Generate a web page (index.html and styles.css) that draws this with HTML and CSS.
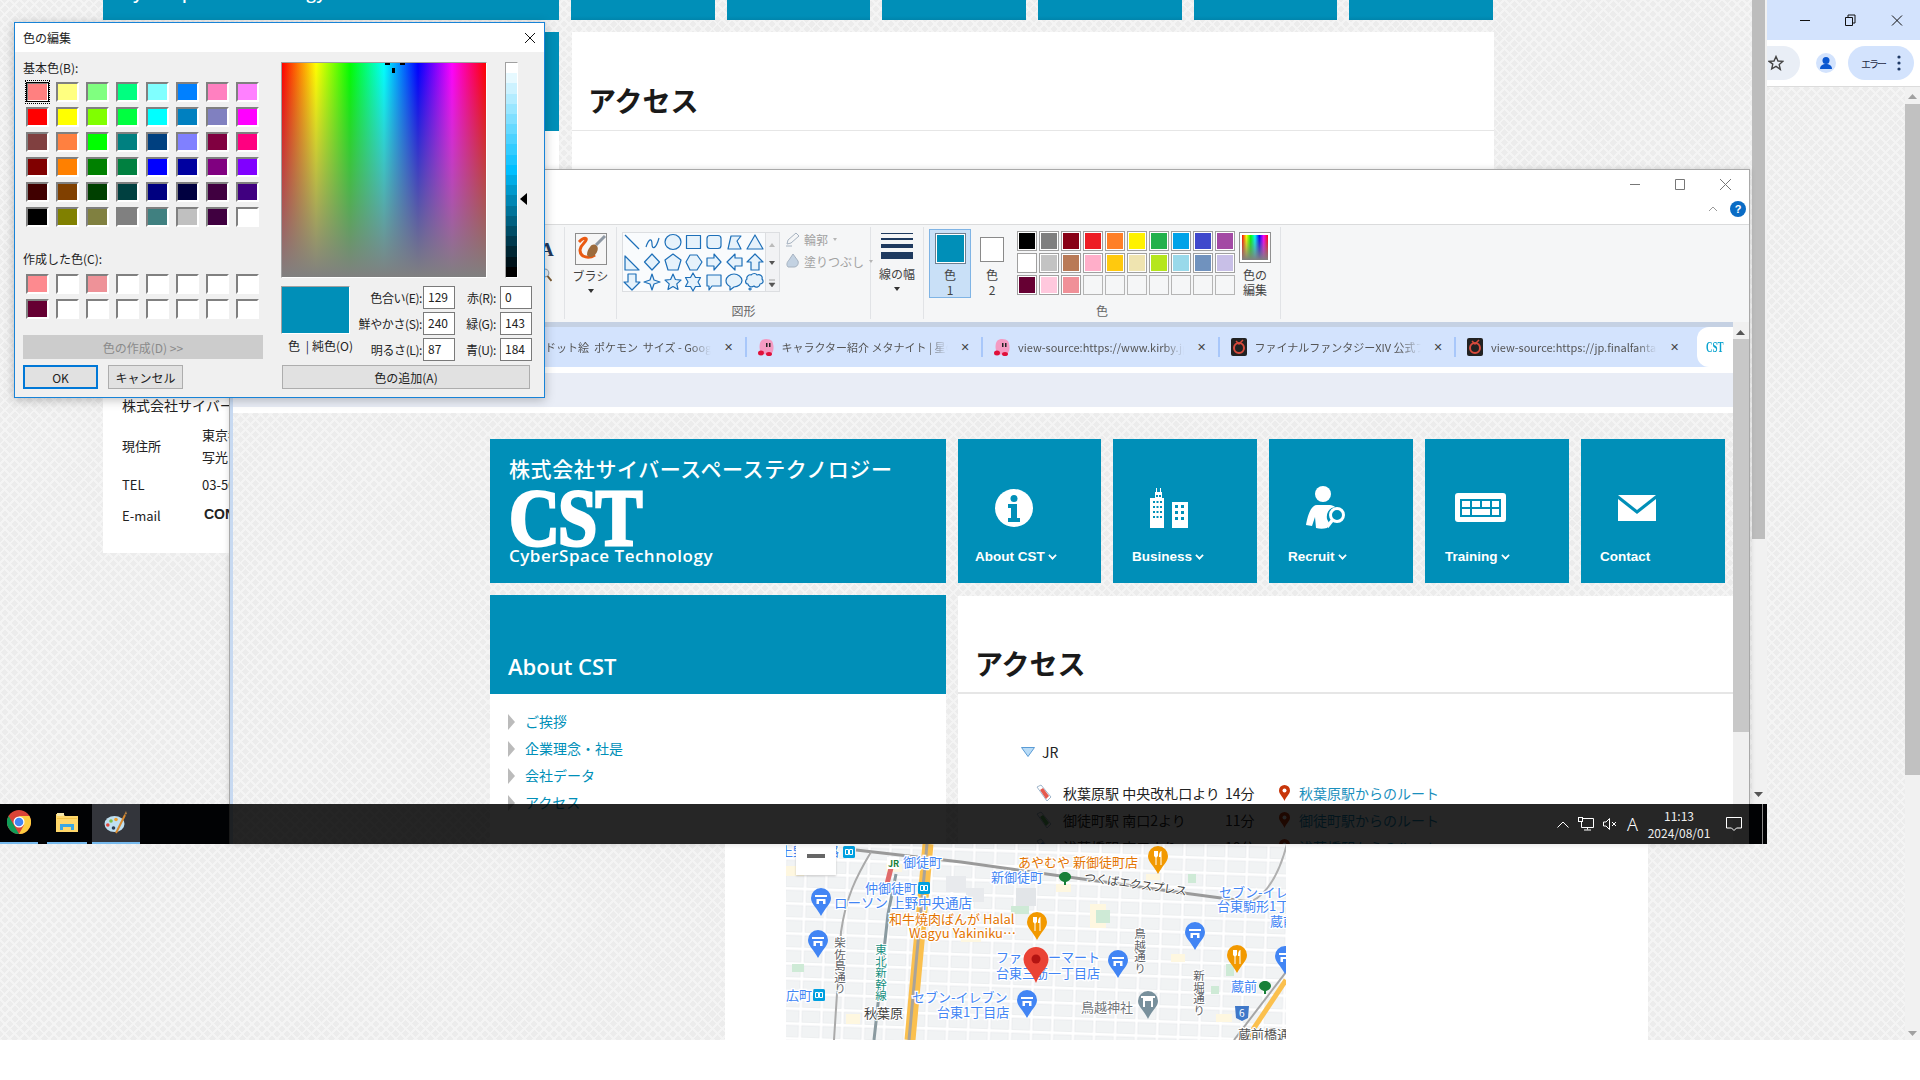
FILE: index.html
```html
<!DOCTYPE html>
<html lang="ja">
<head>
<meta charset="utf-8">
<title>Paint</title>
<link rel="stylesheet" href="styles.css">
</head>
<body>
<div class="desktop">

  <!-- back page -->
  <section class="back">
    <div class="back-nav">
      <div class="back-logo"><span class="back-logo-text">CyberSpace Technology</span></div>
      <div class="back-tile"></div><div class="back-tile"></div><div class="back-tile"></div><div class="back-tile"></div><div class="back-tile"></div><div class="back-tile"></div>
    </div>
    <div class="back-main">
      <aside class="back-side">
        <div class="back-side-head"></div>
        <div class="back-side-body">
          <div class="co-name">株式会社サイバースペース</div>
          <div class="co-row co-addr"><span class="co-key">現住所</span><span class="co-val">東京都<br>写光ビル</span></div>
          <div class="co-row co-tel"><span class="co-key">TEL</span><span class="co-val">03-5000-0000</span></div>
          <div class="co-row"><span class="co-key">E-mail</span><span class="co-val co-mail">CONTACT</span></div>
        </div>
      </aside>
      <div class="back-content"><h1 class="back-h1">アクセス</h1></div>
    </div>
  </section>

  <!-- back chrome right -->
  <div class="bar-back"><div class="bar-back-thumb"></div><svg class="bar-back-arrow" width="9" height="5" viewBox="0 0 9 5"><path d="M0 0h9L4.500 5z" fill="#555"/></svg></div>
  <div class="chrome-right">
    <div class="chrome-caption">
      <svg width="138" height="40" viewBox="0 0 138 40" fill="none" stroke="#111" stroke-width="1"><path d="M33 20.500h10"/><path d="M78.500 17.500h7v8h-7zM81 17.500v-2.500h7v8h-2.500"/><path d="M125 15.500l10 10M135 15.500l-10 10"/></svg>
    </div>
    <div class="chrome-tools">
      <div class="omni-end"><svg width="16" height="16" viewBox="0 0 16 16"><path d="M8 1.500l2 4.500 4.800.4-3.600 3.200 1.100 4.800L8 11.400l-4.300 2.500 1.100-4.800L1.200 6.400 6 6z" fill="none" stroke="#444" stroke-width="1.400"/></svg></div>
      <div class="avatar"><svg width="20" height="20" viewBox="0 0 20 20"><circle cx="10" cy="10" r="10" fill="#d3e3fd"/><circle cx="10" cy="7.500" r="3.500" fill="#0b57d0"/><path d="M4 16c0-3.500 2.700-5 6-5s6 1.500 6 5z" fill="#0b57d0"/></svg></div>
      <div class="err-pill"><span>エラー</span><svg width="4" height="16" viewBox="0 0 4 16" fill="#1f3a66"><circle cx="2" cy="2" r="1.600"/><circle cx="2" cy="8" r="1.600"/><circle cx="2" cy="14" r="1.600"/></svg></div>
    </div>
  </div>
  <div class="bar-outer"><svg class="bar-outer-up" width="9" height="5" viewBox="0 0 9 5"><path d="M0 5h9L4.500 0z" fill="#a0a0a0"/></svg><div class="bar-outer-thumb"></div><svg class="bar-outer-down" width="9" height="5" viewBox="0 0 9 5"><path d="M0 0h9L4.500 5z" fill="#a0a0a0"/></svg></div>

  <!-- lower page with map -->
  <section class="lower">
    <div class="map">
      <svg width="500" height="196" viewBox="0 0 500 196" font-family="'Noto Sans CJK JP',sans-serif" font-size="13">
        <defs>
          <pattern id="blocks" width="21" height="15" patternUnits="userSpaceOnUse" patternTransform="rotate(2)">
            <rect width="21" height="15" fill="#fff"/>
            <rect x="1" y="1" width="18" height="11.500" fill="#f1f3f4" stroke="#e3e5e8" stroke-width=".5"/>
          </pattern>
          <g id="pinb"><path d="M0 0a10 10 0 0 1 10 10c0 6-6 10-10 18-4-8-10-12-10-18A10 10 0 0 1 0 0z" fill="#4285f4"/><path d="M-6 7h12v2H-6zM-4.500 11h9v5H2v-3h-4v3h-2.500z" fill="#fff"/></g>
          <g id="pino"><path d="M0 0a10 10 0 0 1 10 10c0 6-6 10-10 18-4-8-10-12-10-18A10 10 0 0 1 0 0z" fill="#f29900"/><path d="M-4 5v5l1.500 1.500V19h1v-7.500L0 10V5M3 5c-1.500 1-2 3-2 6h1.500v8h1V5z" fill="#fff"/></g>
          <g id="metro"><rect width="12" height="12" rx="1.500" fill="#00a0e0"/><path d="M2.500 3.500h3v5h-3zM6.500 3.500h3v5h-3z" fill="none" stroke="#fff"/></g>
        </defs>
        <rect width="500" height="196" fill="url(#blocks)"/>
        <g fill="#fef7e0"><rect x="0" y="22" width="18" height="10"/><rect x="100" y="20" width="16" height="8"/><rect x="304" y="60" width="16" height="24"/><rect x="175" y="90" width="20" height="8"/><rect x="60" y="170" width="14" height="10"/><rect x="385" y="110" width="14" height="8"/><rect x="430" y="170" width="16" height="8"/><rect x="270" y="40" width="15" height="8"/><rect x="360" y="30" width="14" height="6"/></g>
        <g fill="#ceead6"><rect x="310" y="66" width="14" height="13"/><rect x="225" y="62" width="18" height="8"/><rect x="402" y="30" width="8" height="9"/><rect x="440" y="120" width="8" height="12"/><rect x="6" y="120" width="12" height="8"/><rect x="425" y="142" width="8" height="8"/></g>
        <rect x="230" y="44" width="20" height="18" fill="#e2e5e8"/>
        <rect x="160" y="32" width="20" height="16" fill="#e8eaed"/>
        <rect x="180" y="44" width="18" height="14" fill="#e8eaed"/>
        <!-- railways and main roads -->
        <path d="M70 6l105 12 230 32 60 8" fill="none" stroke="#9a9a9a" stroke-width="3"/>
        <path d="M465 58c20-10 30-35 36-58" fill="none" stroke="#b0b0b0" stroke-width="2"/>
        <path d="M85 8c-15 25-25 45-30 80L48 196" fill="none" stroke="#aaa" stroke-width="2"/>
        <path d="M142 0l-18 196" fill="none" stroke="#fbc04e" stroke-width="11"/>
        <path d="M141 0l-18 196" fill="none" stroke="#a9a39a" stroke-width="3"/>
        <path d="M110 30l-8 40-14 126" fill="none" stroke="#8a9aa0" stroke-width="3"/>
        <path d="M105 24l-5 20" fill="none" stroke="#e06a6a" stroke-width="5"/>
        <path d="M460 196l40-60" fill="none" stroke="#fbc04e" stroke-width="5"/>
        <path d="M448 196l52-68" fill="none" stroke="#a6a6a6" stroke-width="2"/>
        <!-- pins -->
        <use href="#pinb" x="35" y="44"/><use href="#pinb" x="32" y="86"/><use href="#pinb" x="332" y="106"/>
        <use href="#pinb" x="409" y="78"/><use href="#pinb" x="499" y="102"/><use href="#pinb" x="241" y="146"/>
        <use href="#pino" x="372" y="2"/><use href="#pino" x="251" y="68"/><use href="#pino" x="451" y="101"/>
        <use href="#metro" x="57" y="2"/><use href="#metro" x="132" y="38"/><use href="#metro" x="27" y="145"/>
        <path d="M362 158a10 10 0 0 1 10 10c0 6-6 9-10 18-4-9-10-12-10-18a10 10 0 0 1 10-10z" transform="translate(0 -11)" fill="#78909c"/>
        <path d="M355 152h14v2h-2v9h-2v-6h-6v6h-2v-9h-2z" fill="#fff"/>
        <path d="M279 38c-2 0-6-2-6-5s3-5 6-5 6 2 6 5-4 5-6 5z" fill="#188038"/><rect x="278" y="37" width="2" height="4" fill="#188038"/>
        <path d="M479 147c-2 0-6-2-6-5s3-5 6-5 6 2 6 5-4 5-6 5z" fill="#188038"/><rect x="478" y="146" width="2" height="4" fill="#188038"/>
        <rect x="101" y="13" width="12" height="12" fill="#fff"/><text x="102" y="23" font-size="9" font-weight="700" fill="#188038">JR</text>
        <path d="M449 162h14l-1 12-6 3-6-3z" fill="#3f78c9"/><text x="453" y="173" font-size="10" fill="#fff">6</text>
        <!-- labels -->
        <g fill="#4285f4" stroke="#fff" stroke-width="2.500" paint-order="stroke">
          <text x="-6" y="12">上野</text><text x="40" y="12">路</text><text x="117" y="23">御徒町</text><text x="205" y="38">新御徒町</text>
          <text x="79" y="49">仲御徒町</text><text x="48" y="64" font-size="13.500">ローソン 上野中央通店</text>
          <text x="210" y="118">ファミリーマート</text><text x="210" y="134">台東三筋一丁目店</text>
          <text x="0" y="156">広町</text><text x="126" y="158">セブン-イレブン</text><text x="151" y="173">台東1丁目店</text>
          <text x="433" y="53">セブン-イレ</text><text x="431" y="67">台東駒形1丁目</text><text x="484" y="82">蔵前</text><text x="445" y="147">蔵前</text>
        </g>
        <g fill="#e37400" stroke="#fff" stroke-width="2.500" paint-order="stroke">
          <text x="232" y="23">あやむや 新御徒町店</text><text x="103" y="80">和牛焼肉ばんが Halal</text><text x="123" y="94">Wagyu Yakiniku…</text>
        </g>
        <g fill="#5f6368" stroke="#fff" stroke-width="2" paint-order="stroke">
          <text x="78" y="174" fill="#444">秋葉原</text><text x="295" y="168" fill="#70757a">鳥越神社</text><text x="452" y="195" fill="#555">蔵前橋通</text>
          <text x="298" y="37" font-size="11.500" transform="rotate(8 298 37)" fill="#444">つくばエクスプレス</text>
        </g>
        <g class="map-v" fill="#5f6368" font-size="11.500" stroke="#fff" stroke-width="2" paint-order="stroke">
          <text x="54" y="93">柴佐島通り</text><text x="354" y="84">鳥越通り</text><text x="413" y="126">新堀通り</text>
          <text x="95" y="100" fill="#188f7f">東北新幹線</text>
        </g>
        <!-- red marker -->
        <path d="M250 103a12.500 12.500 0 0 1 12.500 12.500c0 8-8 12-12.500 23.500-4.500-11.500-12.500-15.500-12.500-23.500A12.500 12.500 0 0 1 250 103z" fill="#ea4335"/>
        <circle cx="250" cy="115" r="4.500" fill="#b31412"/>
      </svg>
      <div class="map-zoom"><span class="map-minus"></span></div>
    </div>
  </section>
  <div class="bottom-white"></div>

  <!-- paint window -->
  <section class="paint">
    <header class="paint-title">
      <div class="paint-caption">
        <svg width="112" height="22" viewBox="0 0 112 22" fill="none" stroke="#777"><path d="M6 11.500h10"/><path d="M51.500 6.500h9v10h-9z"/><path d="M96 6l11 11M107 6L96 17"/></svg>
      </div>
      <div class="paint-help">
        <svg width="10" height="6" viewBox="0 0 10 6"><path d="M1 5l4-4 4 4" fill="none" stroke="#999"/></svg>
        <span class="help-dot">?</span>
      </div>
    </header>
    <div class="ribbon">
      <div class="rb-group rb-tools">
        <span class="rb-a">A</span>
        <svg width="12" height="14" viewBox="0 0 12 14"><circle cx="5" cy="5" r="3.800" fill="#e8f0f8" stroke="#9aa8b5" stroke-width="1.200"/><path d="M7.500 8l4 5" stroke="#7a5a32" stroke-width="2"/></svg>
      </div>
      <div class="rb-group rb-brush">
        <svg class="brush-ico" width="32" height="32" viewBox="0 0 32 32"><rect x=".5" y=".5" width="31" height="31" fill="#f6f6f6" stroke="#8d8d8d"/><path d="M4 9c6-6 10-4 5 1-4 4-6 9-1 13 4 2 9 1 12-1" fill="none" stroke="#ea5a12" stroke-width="3"/><path d="M15 14c2-3 5-3 7-1 2 3 0 7-3 10-3 2-6 1-7-1 0-3 1-6 3-8z" fill="#9c6b3c"/><path d="M21 12L30 3" stroke="#8e98a3" stroke-width="3"/></svg>
        <span class="rb-lbl">ブラシ</span>
        <span class="caret"></span>
      </div>
      <div class="rb-group rb-shapes">
        <div class="rb-shapes-row">
          <div class="gallery">
            <svg width="143" height="60" viewBox="0 0 143 60" fill="#e6f2fb" stroke="#1d6fb8" stroke-width="1.200" stroke-linejoin="round">
              <path d="M3 3l14 14" fill="none"/>
              <path d="M24 15c3-9 6-9 6-3s4 5 7-6" fill="none"/>
              <ellipse cx="51" cy="10" rx="8" ry="7.500"/>
              <rect x="64.500" y="3.500" width="14" height="13"/>
              <rect x="85" y="3.500" width="14" height="13" rx="3"/>
              <path d="M106 17l3-13h10l-4 5 4 8z"/>
              <path d="M133 3l8 14h-16z"/>
              <path d="M3 24v14h14z"/>
              <path d="M30 22l7.500 8-7.500 8-7.500-8z"/>
              <path d="M51 22l8 6-3 10H46l-3-10z"/>
              <path d="M68 23h7l5 7-5 8h-7l-4-8z"/>
              <path d="M85 26h7v-4l7 8-7 8v-4h-7z"/>
              <path d="M120 26h-7v-4l-8 8 8 8v-4h7z"/>
              <path d="M133 22l8 8h-4v8h-8v-8h-4z"/>
              <path d="M6 42h8v8h4l-8 8-8-8h4z"/>
              <path d="M30 42l2 6 6 2-6 2-2 6-2-6-6-2 6-2z"/>
              <path d="M51 42l2.400 5.500 5.600.6-4.200 3.800 1.200 5.600-5-3-5 3 1.200-5.600L43 48.100l5.600-.6z"/>
              <path d="M71 41l2.500 4.500h5l-2.500 4.500 2.500 4.500h-5L71 59l-2.500-4.500h-5L66 50l-2.500-4.500h5z"/>
              <path d="M85 43h14v11h-9l-3 4v-4h-2z"/>
              <path d="M112 42c4 0 8 3 8 6.500s-4 6.500-8 6.500l-4 3v-3.500c-2-1-4-3-4-6 0-3.500 4-6.500 8-6.500z"/>
              <path d="M129 43c2-2 5-2 6 0 3-1 6 1 5 4 2 2 1 5-2 5 0 3-4 4-6 2-3 2-6 0-6-2-3 0-3-4-1-5-1-2 2-5 4-4zM128 56a1 1 0 1 0 .1 0"/>
            </svg>
          </div>
          <div class="gal-scroll">
            <svg width="14" height="60" viewBox="0 0 14 60"><path d="M4 14l3-4 3 4z" fill="#bbb"/><path d="M4 28l3 4 3-4z" fill="#555"/><path d="M4 47h6M4 50l3 4 3-4z" fill="#555" stroke="#555" stroke-width=".5"/></svg>
          </div>
          <div class="outline-col">
            <div class="out-row"><svg width="16" height="16" viewBox="0 0 16 16" fill="none" stroke="#a6b2c0"><path d="M2 13l1-4 8-7 3 3-8 7z"/><path d="M1 15h6"/></svg><span>輪郭</span><i class="caret-sm"></i></div>
            <div class="out-row"><svg width="16" height="16" viewBox="0 0 16 16"><path d="M8 1l5 7c1 3-1 6-4 6H3c-2-2-1-5 1-7z" fill="#c3d2e2" stroke="#a6b2c0"/></svg><span>塗りつぶし</span><i class="caret-sm"></i></div>
          </div>
        </div>
        <div class="rb-foot">図形</div>
      </div>
      <div class="rb-group rb-width">
        <div class="width-ico"><i class="w1"></i><i class="w2"></i><i class="w3"></i><i class="w4"></i></div>
        <span class="rb-lbl">線の幅</span>
        <span class="caret"></span>
      </div>
      <div class="rb-group rb-colors">
        <div class="rb-colors-row">
          <div class="col-btn col-active"><span class="col-sw col-sw1"></span><span class="col-txt">色<br>1</span></div>
          <div class="col-btn"><span class="col-sw col-sw2"></span><span class="col-txt">色<br>2</span></div>
          <div class="col-grid">
            <i style="background:#000"></i><i style="background:#7f7f7f"></i><i style="background:#880015"></i><i style="background:#ed1c24"></i><i style="background:#ff7f27"></i><i style="background:#fff200"></i><i style="background:#22b14c"></i><i style="background:#00a2e8"></i><i style="background:#3f48cc"></i><i style="background:#a349a4"></i>
            <i style="background:#fff"></i><i style="background:#c3c3c3"></i><i style="background:#b97a57"></i><i style="background:#ffaec9"></i><i style="background:#ffc90e"></i><i style="background:#efe4b0"></i><i style="background:#b5e61d"></i><i style="background:#99d9ea"></i><i style="background:#7092be"></i><i style="background:#c8bfe7"></i>
            <i style="background:#660033"></i><i style="background:#ffc8dd"></i><i style="background:#f09098"></i><i class="e"></i><i class="e"></i><i class="e"></i><i class="e"></i><i class="e"></i><i class="e"></i><i class="e"></i>
          </div>
          <div class="col-edit"><span class="col-rainbow"></span><span class="col-txt">色の<br>編集</span></div>
        </div>
        <div class="rb-foot">色</div>
      </div>
    </div>

    <div class="canvas">
      <div class="shot">
        <div class="shot-band"></div>
        <div class="tabstrip">
          <div class="tab tab-first"><span class="tab-text">ドット絵&nbsp; ポケモン&nbsp; サイズ - Google 検索</span><span class="tab-x">✕</span></div><i class="tab-sep"></i>
          <div class="tab"><svg class="fav" width="16" height="18" viewBox="0 0 16 18"><path d="M3 3c3-3 9-2 11 0 2 4 2 9 0 12-3 2-8 2-11 0-2-4-2-9 0-12z" fill="#f49ac2"/><ellipse cx="3" cy="15" rx="3" ry="2.500" fill="#e0103a"/><ellipse cx="11" cy="16" rx="3" ry="2" fill="#e0103a"/><rect x="8" y="5" width="1.500" height="4" fill="#222"/><rect x="11" y="5" width="1.500" height="4" fill="#222"/></svg><span class="tab-text">キャラクター紹介 メタナイト | 星のカービィ</span><span class="tab-x">✕</span></div><i class="tab-sep"></i>
          <div class="tab"><svg class="fav" width="16" height="18" viewBox="0 0 16 18"><path d="M3 3c3-3 9-2 11 0 2 4 2 9 0 12-3 2-8 2-11 0-2-4-2-9 0-12z" fill="#f49ac2"/><ellipse cx="3" cy="15" rx="3" ry="2.500" fill="#e0103a"/><ellipse cx="11" cy="16" rx="3" ry="2" fill="#e0103a"/><rect x="8" y="5" width="1.500" height="4" fill="#222"/><rect x="11" y="5" width="1.500" height="4" fill="#222"/></svg><span class="tab-text">view-source:https://www.kirby.jp/characters</span><span class="tab-x">✕</span></div><i class="tab-sep"></i>
          <div class="tab"><svg class="fav" width="16" height="18" viewBox="0 0 16 18"><rect width="16" height="18" rx="2" fill="#222"/><circle cx="8" cy="10" r="5" fill="none" stroke="#d84a3c" stroke-width="2"/><path d="M5 3l3 3 4-4" fill="none" stroke="#d84a3c" stroke-width="1.500"/></svg><span class="tab-text">ファイナルファンタジーXIV 公式プロモーション</span><span class="tab-x">✕</span></div><i class="tab-sep tab-sep-last"></i>
          <div class="tab tab-last"><svg class="fav" width="16" height="18" viewBox="0 0 16 18"><rect width="16" height="18" rx="2" fill="#222"/><circle cx="8" cy="10" r="5" fill="none" stroke="#d84a3c" stroke-width="2"/><path d="M5 3l3 3 4-4" fill="none" stroke="#d84a3c" stroke-width="1.500"/></svg><span class="tab-text">view-source:https://jp.finalfantasyxiv.com</span><span class="tab-x">✕</span></div>
          <div class="tab-active"><span class="fav-cst">CST</span></div>
        </div>
        <div class="shot-gap"></div>
        <div class="shot-toolbar"></div>
        <div class="shot-gap"></div>
        <div class="site">
          <div class="site-head">
            <div class="logo">
              <div class="logo-jp">株式会社サイバースペーステクノロジー</div>
              <div class="logo-cst">CST</div>
              <div class="logo-en">CyberSpace Technology</div>
            </div>
            <a class="tile tile-first">
              <svg class="tile-ico" width="38" height="38" viewBox="0 0 38 38"><circle cx="19" cy="19" r="19" fill="#fff"/><circle cx="19" cy="9.500" r="3.500" fill="#008fb8"/><path d="M13 15h9v14h3v4H13v-4h3v-10h-3z" fill="#008fb8"/></svg>
              <span class="tile-lbl">About CST<i class="chev"></i></span>
            </a>
            <a class="tile">
              <svg class="tile-ico" width="38" height="40" viewBox="0 0 38 40" fill="#fff"><path d="M5 4h1V0h1v4h3V0h1v4h1v6h2v30H0V10h5z"/><rect x="22" y="14" width="16" height="26"/><g fill="#008fb8"><rect x="6" y="7" width="2" height="2"/><rect x="9" y="7" width="2" height="2"/><rect x="3" y="13" width="2" height="2"/><rect x="6.500" y="13" width="2" height="2"/><rect x="10" y="13" width="2" height="2"/><rect x="3" y="18" width="2" height="2"/><rect x="6.500" y="18" width="2" height="2"/><rect x="10" y="18" width="2" height="2"/><rect x="3" y="23" width="2" height="2"/><rect x="6.500" y="23" width="2" height="2"/><rect x="10" y="23" width="2" height="2"/><rect x="3" y="28" width="2" height="2"/><rect x="6.500" y="28" width="2" height="2"/><rect x="10" y="28" width="2" height="2"/><rect x="25" y="17" width="3" height="3"/><rect x="31" y="17" width="3" height="3"/><rect x="25" y="23" width="3" height="3"/><rect x="31" y="23" width="3" height="3"/><rect x="25" y="29" width="3" height="3"/><rect x="31" y="29" width="3" height="3"/></g></svg>
              <span class="tile-lbl">Business<i class="chev"></i></span>
            </a>
            <a class="tile">
              <svg class="tile-ico" width="40" height="43" viewBox="0 0 40 43" fill="#fff"><circle cx="17" cy="8" r="8"/><path d="M11 19h13c2 0 4 1 5 2-6 1-9 6-8 12l2 4-2 5c-4 1-7 1-11 0l-1-11-3 9-6-1c1-6 4-20 11-20z"/><circle cx="31" cy="29" r="6.500" fill="none" stroke="#fff" stroke-width="3"/><path d="M26.500 34L21 41" stroke="#fff" stroke-width="3.500"/></svg>
              <span class="tile-lbl">Recruit<i class="chev"></i></span>
            </a>
            <a class="tile">
              <svg class="tile-ico" width="51" height="29" viewBox="0 0 51 29"><rect width="51" height="29" rx="3" fill="#fff"/><rect x="5" y="6" width="41" height="18" fill="#008fb8"/><g fill="#fff"><rect x="7" y="8" width="8" height="6"/><rect x="17" y="8" width="8" height="6"/><rect x="27" y="8" width="8" height="6"/><rect x="37" y="8" width="7" height="6"/><rect x="7" y="16" width="8" height="6"/><rect x="17" y="16" width="18" height="6"/><rect x="37" y="16" width="7" height="6"/></g></svg>
              <span class="tile-lbl">Training<i class="chev"></i></span>
            </a>
            <a class="tile">
              <svg class="tile-ico" width="38" height="26" viewBox="0 0 38 26" fill="#fff"><path d="M0 0h38L19 15z"/><path d="M0 4l19 15L38 4v22H0z"/></svg>
              <span class="tile-lbl">Contact</span>
            </a>
          </div>
          <div class="site-main">
            <aside class="side">
              <h2 class="side-head">About CST</h2>
              <ul class="side-list">
                <li>ご挨拶</li><li>企業理念・社是</li><li>会社データ</li><li>アクセス</li>
              </ul>
            </aside>
            <article class="content">
              <h1 class="content-h1">アクセス</h1>
              <div class="route">
                <div class="jr"><svg width="14" height="10" viewBox="0 0 14 10"><path d="M.5.500h13L7 9.500z" fill="#b9dcf7" stroke="#5a9bd5"/></svg><span>JR</span></div>
                <div class="st">
                  <svg width="16" height="18" viewBox="0 0 16 18"><path d="M1 3l4-2 10 12-4 4z" fill="#fff" stroke="#9fb6cc"/><path d="M4 6l3-2 6 8-3 3z" fill="#e55a4e"/></svg>
                  <span class="st-a">秋葉原駅 中央改札口より</span><span class="st-b">14分</span>
                  <svg class="st-pin" width="11" height="16" viewBox="0 0 11 16"><path d="M5.500 0A5.500 5.500 0 0 1 11 5.500c0 3.500-3.500 5.500-5.500 10.500C3.500 11 0 9 0 5.500A5.500 5.500 0 0 1 5.500 0z" fill="#c8360a"/><circle cx="5.500" cy="5.500" r="2" fill="#fff"/></svg>
                  <span class="st-link">秋葉原駅からのルート</span>
                </div>
                <div class="st">
                  <svg width="16" height="18" viewBox="0 0 16 18"><path d="M1 3l4-2 10 12-4 4z" fill="#fff" stroke="#9fb6cc"/><path d="M4 6l3-2 6 8-3 3z" fill="#5cb85c"/></svg>
                  <span class="st-a">御徒町駅 南口2より</span><span class="st-b">11分</span>
                  <svg class="st-pin" width="11" height="16" viewBox="0 0 11 16"><path d="M5.500 0A5.500 5.500 0 0 1 11 5.500c0 3.500-3.500 5.500-5.500 10.500C3.500 11 0 9 0 5.500A5.500 5.500 0 0 1 5.500 0z" fill="#c8360a"/><circle cx="5.500" cy="5.500" r="2" fill="#fff"/></svg>
                  <span class="st-link">御徒町駅からのルート</span>
                </div>
                <div class="st">
                  <svg width="16" height="18" viewBox="0 0 16 18"><path d="M1 3l4-2 10 12-4 4z" fill="#fff" stroke="#9fb6cc"/><path d="M4 6l3-2 6 8-3 3z" fill="#5b8ed6"/></svg>
                  <span class="st-a">浅草橋駅 東口より</span><span class="st-b">10分</span>
                  <svg class="st-pin" width="11" height="16" viewBox="0 0 11 16"><path d="M5.500 0A5.500 5.500 0 0 1 11 5.500c0 3.500-3.500 5.500-5.500 10.500C3.500 11 0 9 0 5.500A5.500 5.500 0 0 1 5.500 0z" fill="#c8360a"/><circle cx="5.500" cy="5.500" r="2" fill="#fff"/></svg>
                  <span class="st-link">浅草橋駅からのルート</span>
                </div>
              </div>
            </article>
          </div>
        </div>
      </div>
      <div class="canvas-bar">
        <svg class="canvas-bar-up" width="9" height="5" viewBox="0 0 9 5"><path d="M0 5h9L4.500 0z" fill="#555"/></svg>
        <div class="canvas-bar-thumb"></div>
      </div>
    </div>
  </section>

  <!-- colour dialog -->
  <section class="dialog">
    <header class="dlg-title"><span>色の編集</span><svg width="12" height="12" viewBox="0 0 12 12"><path d="M1 1l10 10M11 1L1 11" stroke="#111" fill="none"/></svg></header>
    <div class="dlg-body">
      <div class="dlg-left">
        <div class="dlg-lbl">基本色(B):</div>
        <div class="sw-grid">
          <i class="sel" style="background:#ff8080"></i><i style="background:#ffff80"></i><i style="background:#80ff80"></i><i style="background:#00ff80"></i><i style="background:#80ffff"></i><i style="background:#0080ff"></i><i style="background:#ff80c0"></i><i style="background:#ff80ff"></i>
          <i style="background:#ff0000"></i><i style="background:#ffff00"></i><i style="background:#80ff00"></i><i style="background:#00ff40"></i><i style="background:#00ffff"></i><i style="background:#0080c0"></i><i style="background:#8080c0"></i><i style="background:#ff00ff"></i>
          <i style="background:#804040"></i><i style="background:#ff8040"></i><i style="background:#00ff00"></i><i style="background:#008080"></i><i style="background:#004080"></i><i style="background:#8080ff"></i><i style="background:#800040"></i><i style="background:#ff0080"></i>
          <i style="background:#800000"></i><i style="background:#ff8000"></i><i style="background:#008000"></i><i style="background:#008040"></i><i style="background:#0000ff"></i><i style="background:#0000a0"></i><i style="background:#800080"></i><i style="background:#8000ff"></i>
          <i style="background:#400000"></i><i style="background:#804000"></i><i style="background:#004000"></i><i style="background:#004040"></i><i style="background:#000080"></i><i style="background:#000040"></i><i style="background:#400040"></i><i style="background:#400080"></i>
          <i style="background:#000000"></i><i style="background:#808000"></i><i style="background:#808040"></i><i style="background:#808080"></i><i style="background:#408080"></i><i style="background:#c0c0c0"></i><i style="background:#400040"></i><i style="background:#ffffff"></i>
        </div>
        <div class="dlg-lbl dlg-lbl2">作成した色(C):</div>
        <div class="sw-grid sw-custom">
          <i style="background:#fd8a8f"></i><i></i><i style="background:#ee9298"></i><i></i><i></i><i></i><i></i><i></i>
          <i style="background:#660033"></i><i></i><i></i><i></i><i></i><i></i><i></i><i></i>
        </div>
        <button class="dlg-btn dlg-define">色の作成(D) &gt;&gt;</button>
        <div class="dlg-actions">
          <button class="dlg-btn dlg-ok">OK</button>
          <button class="dlg-btn dlg-cancel">キャンセル</button>
        </div>
      </div>
      <div class="dlg-right">
        <div class="picker">
          <div class="hue">
            <span class="cross cross-l"></span><span class="cross cross-r"></span><span class="cross cross-b"></span>
          </div>
          <div class="lum"></div>
          <span class="lum-arrow"></span>
        </div>
        <div class="dlg-values">
          <div class="preview-col">
            <div class="preview"></div>
            <div class="preview-lbl">色 <b>|</b>純色(O)</div>
          </div>
          <div class="fields">
            <label>色合い(E):</label><span class="fld">129</span><label>赤(R):</label><span class="fld">0</span>
            <label>鮮やかさ(S):</label><span class="fld">240</span><label>緑(G):</label><span class="fld">143</span>
            <label>明るさ(L):</label><span class="fld">87</span><label>青(U):</label><span class="fld">184</span>
          </div>
        </div>
        <button class="dlg-btn dlg-add">色の追加(A)</button>
      </div>
    </div>
  </section>

  <!-- taskbar -->
  <footer class="taskbar">
    <div class="task-apps">
      <div class="task-app task-chrome"><svg width="24" height="24" viewBox="0 0 24 24"><circle cx="12" cy="12" r="12" fill="#db4437"/><path d="M12 12L1.500 18A12 12 0 0 1 4 3.500z" fill="#db4437"/><path d="M1.600 6l5.200 9 5.200 9A12 12 0 0 1 1.600 6z" fill="#0f9d58"/><path d="M12 24a12 12 0 0 0 10.400-18H12l5 9z" fill="#ffcd40"/><circle cx="12" cy="12" r="5.500" fill="#fff"/><circle cx="12" cy="12" r="4.300" fill="#4285f4"/></svg></div>
      <div class="task-app task-files"><svg width="22" height="19" viewBox="0 0 22 19"><path d="M0 1h7l2 2h13v16H0z" fill="#ffd76a"/><rect x="1" y="0" width="7" height="3" fill="#f6e7a8"/><rect x="1" y="5" width="20" height="1" fill="#f3c44a"/><path d="M4 11h14v6h-3v-3H7v3H4z" fill="#3aa7e3"/></svg></div>
      <div class="task-app task-paint"><svg width="24" height="24" viewBox="0 0 24 24"><ellipse cx="10.500" cy="14" rx="10" ry="8" fill="#bfdff0"/><circle cx="7" cy="11" r="1.800" fill="#7cc04b"/><circle cx="12" cy="9.500" r="1.800" fill="#f0a030"/><circle cx="3.800" cy="15" r="1.800" fill="#e0483c"/><circle cx="9.500" cy="18" r="1.800" fill="#2b3d55"/><path d="M12 23L21 5" stroke="#d98a2f" stroke-width="2"/><path d="M20 5l2-4 1 3z" fill="#b57f3f"/></svg></div>
    </div>
    <div class="task-mid"></div>
    <div class="tray">
      <svg width="12" height="7" viewBox="0 0 12 7"><path d="M.5 6.500L6 1l5.500 5.500" fill="none" stroke="#fff"/></svg>
      <svg width="16" height="14" viewBox="0 0 16 14" fill="none" stroke="#fff"><path d="M3.500 1.500h12v9h-12zM9.500 10.500v2M6 13h7"/><rect x=".5" y=".5" width="4" height="4" fill="#262626"/></svg>
      <svg width="15" height="12" viewBox="0 0 15 12" fill="none" stroke="#fff"><path d="M.5 4h2.500L6.500.5v11L3 8H.5z"/><path d="M9 4l4 4M13 4L9 8"/></svg>
      <span class="tray-a">A</span>
      <div class="clock"><span>11:13</span><span>2024/08/01</span></div>
      <svg width="16" height="15" viewBox="0 0 16 15" fill="none" stroke="#fff"><path d="M.5.500h15v10.500h-5l-2.500 2.500-2.500-2.500h-5z"/></svg>
    </div>
    <div class="task-end"></div>
  </footer>
</div>
</body>
</html>
```

FILE: styles.css
```css
* { box-sizing: border-box; }
html, body { margin: 0; padding: 0; width: 1920px; height: 1080px; overflow: hidden; }
body { font-family: "Noto Sans CJK JP", "Noto Sans", sans-serif; font-size: 12px; color: #222; }
button { font: inherit; padding: 0; }

.desktop {
  position: relative; width: 1920px; height: 1080px; overflow: hidden;
  background-color: #ececec;
  background-image:
    repeating-linear-gradient(45deg, #f4f4f4 0 2px, transparent 2px 7px),
    repeating-linear-gradient(-45deg, #f4f4f4 0 2px, transparent 2px 7px);
}

/* back page */
.back { position: absolute; left: 103px; top: 0; width: 1391px; height: 560px; display: flex; flex-direction: column; gap: 12px; }
.back-nav { display: flex; gap: 12px; height: 20px; }
.back-logo { width: 456px; background: #008fb8; overflow: hidden; padding-left: 19px; }
.back-logo-text { display: block; margin-top: -19px; font: 600 17px/24px "Open Sans", sans-serif; color: #fff; letter-spacing: .5px; }
.back-tile { width: 143.700px; background: linear-gradient(#008fb8 80%, #0085ac); }
.back-main { display: flex; gap: 13px; flex: 1; }
.back-side { width: 456px; height: 521px; background: #fff; display: flex; flex-direction: column; }
.back-side-head { height: 99px; background: #008fb8; flex: none; }
.back-side-body { padding: 264px 0 0 19px; }
.co-name { font-size: 14px; white-space: nowrap; }
.co-row { display: flex; margin-top: 12px; font-size: 13px; }
.co-addr { margin-top: 9px; line-height: 22px; }
.co-tel { margin-top: 7px; }
.co-key { width: 80px; flex: none; }
.co-addr .co-key { align-self: center; }
.co-val { white-space: nowrap; }
.co-mail { font-weight: 700; color: #222; font-size: 14px; margin-left: 2px; font-family: "Liberation Sans", sans-serif; }
.back-content { flex: 1; height: 150px; padding: 0 16px; background: #fff linear-gradient(#e6e6e6, #e6e6e6) 0 98px / 100% 1px no-repeat; }
.back-h1 { margin: 0; padding-top: 46px; font-size: 28px; line-height: 44px; font-weight: 700; color: #1a1a1a; }

.bar-back { position: absolute; left: 1752px; top: 0; width: 15px; height: 804px; background: #f1f1f1; }
.bar-back-thumb { width: 13px; height: 539px; background: #bdbdbd; }
.bar-back-arrow { position: absolute; left: 2px; top: 792px; }

.chrome-right { position: absolute; left: 1767px; top: 0; width: 153px; height: 87px; background: #fff; border-bottom: 1px solid #dcdcdc; }
.chrome-caption { height: 40px; background: #d3e3fd; }
.chrome-caption svg { display: block; }
.chrome-tools { display: flex; align-items: center; height: 46px; }
.omni-end { width: 33px; height: 34px; background: #e9eef6; border-radius: 0 17px 17px 0; display: flex; align-items: center; padding-left: 1px; }
.avatar { margin-left: 16px; width: 20px; height: 20px; }
.avatar svg, .err-pill svg { display: block; }
.err-pill { margin-left: 12px; width: 66px; height: 34px; border-radius: 17px; background: #d3e3fd; display: flex; align-items: center; gap: 12px; padding-left: 13px; color: #1f2a44; font-size: 10px; letter-spacing: -2px; white-space: nowrap; }

.bar-outer { position: absolute; left: 1905px; top: 87px; width: 15px; height: 953px; background: #f1f1f1; }
.bar-outer-up { position: absolute; left: 3px; top: 7px; }
.bar-outer-thumb { position: absolute; left: 0; top: 17px; width: 15px; height: 671px; background: #c1c1c1; }
.bar-outer-down { position: absolute; left: 3px; bottom: 4px; }

/* lower page */
.lower { position: absolute; left: 725px; top: 844px; width: 923px; height: 196px; background: #fff; padding-left: 61px; }
.map { position: relative; width: 500px; height: 196px; overflow: hidden; }
.map svg { display: block; }
.map-v text { writing-mode: vertical-rl; }
.map-zoom { position: absolute; left: 10px; top: 0; width: 40px; height: 31px; background: #fff; display: flex; justify-content: center; padding-top: 10px; box-shadow: 0 1px 2px rgba(0,0,0,.2); }
.map-minus { width: 18px; height: 4px; background: #666; }
.bottom-white { position: absolute; left: 0; top: 1040px; width: 1920px; height: 40px; background: #fff; }

/* paint */
.paint { position: absolute; left: 229px; top: 169px; width: 1521px; height: 675px; background: #fff; border: 1px solid #a9a9a9; border-bottom: 0; display: flex; flex-direction: column; overflow: hidden; box-shadow: 0 0 6px rgba(0,0,0,.15); }
.paint-title { height: 54px; flex: none; background: #fff; position: relative; }
.paint-caption { display: flex; justify-content: flex-end; padding: 3px 13px 0 0; }
.paint-help { display: flex; justify-content: flex-end; align-items: center; gap: 12px; margin-top: 6px; padding-right: 3px; }
.help-dot { width: 16px; height: 16px; border-radius: 50%; background: #0a6cc5; color: #fff; font: 700 11px/16px "Liberation Sans", sans-serif; text-align: center; }
.ribbon { height: 98px; flex: none; background: #f5f6f7; border-top: 1px solid #dadbdc; display: flex; padding-top: 2px; color: #444; }
.rb-group { height: 92px; border-right: 1px solid #e1e3e6; position: relative; flex: none; display: flex; flex-direction: column; }
.rb-foot { position: absolute; left: 0; right: 0; bottom: 1px; text-align: center; color: #666; line-height: 15px; }
.rb-lbl { line-height: 15px; }
.rb-tools { width: 335px; padding: 14px 9px 0 310px; gap: 9px; align-items: flex-start; }
.rb-a { font: 700 19px/18px "Liberation Serif", serif; color: #23395b; }
.rb-brush { width: 52px; align-items: center; padding-top: 6px; }
.brush-ico { margin-bottom: 3px; }
.caret { width: 0; height: 0; border: 3px solid transparent; border-top: 4px solid #333; margin-top: 6px; }
.rb-shapes { width: 254px; padding: 5px 0 0 5px; }
.rb-shapes-row { display: flex; }
.gallery { width: 144px; height: 60px; background: #f9fbfd; border: 1px solid #dcdee1; }
.gallery svg { display: block; margin: -1px 0 0 -1px; }
.gal-scroll { width: 14px; height: 60px; background: #f1f2f4; border: 1px solid #dcdee1; border-left: 0; }
.gal-scroll svg { display: block; margin-left: -1px; }
.outline-col { margin: -1px 0 0 5px; display: flex; flex-direction: column; gap: 6px; color: #a2a2a2; }
.out-row { display: flex; align-items: center; gap: 3px; height: 16px; white-space: nowrap; }
.caret-sm { width: 0; height: 0; border: 2.500px solid transparent; border-top: 3px solid #b5b5b5; margin: 3px 0 0 2px; }
.rb-width { width: 53px; align-items: center; }
.width-ico { width: 32px; margin-top: 6px; display: flex; flex-direction: column; gap: 4px; margin-bottom: 7px; }
.width-ico i { display: block; background: #1f3a5f; }
.w1 { height: 1px; } .w2 { height: 2px; } .w3 { height: 4px; } .w4 { height: 7px; }
.rb-colors { width: 357px; padding: 2px 0 0 5px; }
.rb-colors-row { display: flex; align-items: flex-start; }
.col-btn { width: 42px; height: 69px; display: flex; flex-direction: column; align-items: center; border: 1px solid transparent; }
.col-active { background: #c9e0f7; border-color: #7fb4e5; }
.col-sw { display: block; flex: none; }
.col-sw1 { width: 31px; height: 31px; margin-top: 3px; background: #008fb8; border: 1px solid #6e7f90; box-shadow: inset 0 0 0 1px #fff; }
.col-sw2 { width: 24px; height: 25px; margin: 7px 0 2px; background: #fff; border: 1px solid #8a8a8a; }
.col-txt { text-align: center; line-height: 15px; margin-top: 3px; display: block; color: #444; }
.col-grid { display: grid; grid-template-columns: repeat(10, 20px); grid-auto-rows: 20px; gap: 2px; margin-left: 4px; margin-top: 2px; }
.col-grid i { display: block; border: 1px solid #a0a0a0; box-shadow: inset 0 0 0 1px #fff; }
.col-grid i.e { background: #f5f6f7; box-shadow: none; border-color: #b5b5b5; }
.col-edit { margin-left: 5px; display: flex; flex-direction: column; align-items: center; width: 30px; }
.col-rainbow { width: 30px; height: 29px; margin-top: 4px; border: 2px solid #fff; outline: 1px solid #909090; background: linear-gradient(transparent, #808080), linear-gradient(to right, red, yellow, lime, cyan, blue, magenta, red); }
.col-edit .col-txt { margin-top: 5px; white-space: nowrap; }

.canvas { flex: 1; display: flex; min-height: 0; padding-left: 3px; background: #c7d9f1; }
.shot { width: 1500px; display: flex; flex-direction: column; background: #fff; overflow: hidden; }
.shot-band { height: 5px; background: #c5d1e3; flex: none; }
.tabstrip { height: 40px; background: #d3e3fd; display: flex; align-items: center; padding-left: 277px; flex: none; color: #555; font-size: 11px; }
.tab { width: 234.500px; display: flex; align-items: center; flex: none; padding-left: 11px; gap: 8px; }
.tab-first { padding-left: 35px; }
.tab-last { width: 241px; }
.tab-text { width: 166px; flex: none; overflow: hidden; white-space: nowrap; -webkit-mask-image: linear-gradient(to right, #000 88%, transparent); mask-image: linear-gradient(to right, #000 88%, transparent); }
.tab-x { font-size: 11px; font-weight: 700; color: #444; margin-left: 5px; font-family: "DejaVu Sans", sans-serif; }
.fav { flex: none; }
.tab-sep { width: 2px; height: 20px; background: #a8c7fa; flex: none; }
.tab-active { flex: 1; height: 40px; background: #fff; border-radius: 12px 0 0 12px; display: flex; align-items: center; padding-left: 9px; }
.fav-cst { font: 700 15px/18px "Liberation Serif", serif; color: #0aa3cf; white-space: nowrap; transform: scaleX(.6); transform-origin: left; display: inline-block; }
.shot-gap { height: 6px; background: #fff; flex: none; }
.shot-toolbar { height: 34px; background: #e9edf6; flex: none; }

.site {
  flex: 1; padding: 26px 0 0 257px; min-height: 0;
  background-color: #ececec;
  background-image:
    repeating-linear-gradient(45deg, #f4f4f4 0 2px, transparent 2px 7px),
    repeating-linear-gradient(-45deg, #f4f4f4 0 2px, transparent 2px 7px);
}
.site-head { display: flex; gap: 12px; height: 144px; }
.logo { width: 456px; background: #008fb8; color: #fff; padding: 16px 0 0 19px; }
.logo-jp { font-size: 21px; line-height: 26px; font-weight: 500; letter-spacing: .6px; white-space: nowrap; }
.logo-cst { font: 700 80px/62px "Liberation Serif", serif; -webkit-text-stroke: 3px #fff; transform: scaleX(.88); transform-origin: left; letter-spacing: -2px; height: 56px; margin-top: 6px; white-space: nowrap; }
.logo-en { font: 600 17px/22px "Open Sans", sans-serif; margin-top: 2px; letter-spacing: .5px; }
.tile { width: 144px; background: #008fb8; color: #fff; display: flex; flex-direction: column; position: relative; }
.tile-first { width: 143px; }
.tile-ico { position: absolute; left: 37px; }
.tile-first .tile-ico { top: 50px; }
.tile:nth-child(3) .tile-ico { left: 37px; top: 49px; }
.tile:nth-child(4) .tile-ico { left: 37px; top: 47px; }
.tile:nth-child(5) .tile-ico { left: 30px; top: 54px; }
.tile:nth-child(6) .tile-ico { left: 37px; top: 56px; }
.tile-lbl { position: absolute; left: 19px; top: 109px; font: 700 13.500px/18px "Liberation Sans", sans-serif; white-space: nowrap; display: flex; align-items: center; gap: 2px; }
.tile-first .tile-lbl { left: 17px; }
.tile:nth-child(5) .tile-lbl { left: 20px; }
.chev { width: 7px; height: 7px; border: solid #fff; border-width: 0 2px 2px 0; transform: rotate(45deg) scale(.85); margin: -3px 0 0 2px; display: block; }

.site-main { display: flex; gap: 12px; margin-top: 12px; height: 260px; }
.side { width: 456px; background: #fff; flex: none; }
.side-head { margin: 0; height: 99px; background: #008fb8; color: #fff; font: 600 22px/30px "Open Sans", "Noto Sans", sans-serif; padding: 56px 0 0 18px; }
.side-list { margin: 0; padding: 14px 0 0 16px; list-style: none; color: #008fb8; font-size: 14px; }
.side-list li { height: 27px; line-height: 27px; padding-left: 19px; position: relative; }
.side-list li::before { content: ""; position: absolute; left: 2px; top: 6px; border: 8px solid transparent; border-left: 7px solid #bbb; border-right: 0; }
.content { flex: 1; background: #fff; margin-top: 1px; min-width: 0; }
.content-h1 { margin: 0; height: 98px; border-bottom: 2px solid #e6e6e6; font-size: 28px; line-height: 40px; font-weight: 700; color: #1a1a1a; padding: 47px 0 0 17px; }
.route { padding: 48px 0 0 63px; font-size: 14px; color: #222; }
.jr { display: flex; align-items: center; gap: 7px; height: 20px; }
.st { display: flex; align-items: center; height: 27px; margin-left: 15px; white-space: nowrap; }
.jr + .st { margin-top: 17px; }
.st-a { margin-left: 11px; width: 162px; }
.st-b { width: 32px; }
.st-pin { margin-left: 22px; margin-right: 9px; }
.st-link { color: #1a8fbd; }

.canvas-bar { width: 16px; background: #f0f0f0; position: relative; flex: none; }
.canvas-bar-up { position: absolute; left: 3px; top: 8px; }
.canvas-bar-thumb { position: absolute; left: 0; top: 17px; width: 16px; height: 393px; background: #c8c8c8; }

/* dialog */
.dialog { position: absolute; left: 14px; top: 22px; width: 531px; height: 376px; border: 1px solid #1883d7; background: #f0f0f0; color: #222; display: flex; flex-direction: column; box-shadow: 0 2px 10px rgba(0,0,0,.25); }
.dlg-title { height: 29px; background: #fff; display: flex; align-items: center; justify-content: space-between; padding: 0 8px 0 8px; font-size: 12px; flex: none; }
.dlg-body { display: flex; flex: 1; }
.dlg-left { width: 266px; padding: 8px 0 0 8px; flex: none; }
.dlg-lbl { line-height: 16px; height: 16px; white-space: nowrap; }
.dlg-lbl2 { margin-top: 24px; }
.sw-grid { display: grid; grid-template-columns: repeat(8, 23px); grid-auto-rows: 20px; column-gap: 7px; row-gap: 5px; margin: 6px 0 0 3px; }
.sw-grid i { display: block; background: #fff; border: 2px solid; border-color: #808080 #fff #fff #808080; position: relative; }
.sw-grid i.sel::after { content: ""; position: absolute; inset: -4px -3px; border: 1px dotted #000; }
.sw-grid i.sel::before { content: ""; position: absolute; inset: -2px -2px; border: 1px solid #000; }
.sw-custom { margin-top: 7px; }
.dlg-btn { display: block; height: 24px; background: #e1e1e1; border: 1px solid #adadad; color: #222; text-align: center; }
.dlg-define { width: 240px; margin-top: 16px; background: #cccccc; border-color: #cccccc; color: #8a8a8a; }
.dlg-actions { display: flex; gap: 10px; margin-top: 6px; }
.dlg-ok { width: 75px; border: 2px solid #0078d7; }
.dlg-cancel { width: 75px; }
.dlg-right { width: 264px; flex: none; position: relative; padding-top: 10px; }
.picker { display: flex; gap: 18px; position: relative; }
.hue { width: 206px; height: 216px; position: relative; border: 1px solid #a0a0a0; border-right-color: #fff; border-bottom-color: #fff; background: linear-gradient(transparent, #808080), linear-gradient(to right, #f00, #ff0, #0f0, #0ff, #00f, #f0f, #f00); }
.cross { position: absolute; background: #000; }
.cross-l { left: 103px; top: 0; width: 5px; height: 2px; }
.cross-r { left: 118px; top: 0; width: 5px; height: 2px; }
.cross-b { left: 110px; top: 5px; width: 3px; height: 5px; }
.lum { width: 13px; height: 216px; border: 1px solid #a0a0a0; border-right-color: #fff; border-bottom-color: #fff; background: linear-gradient(#fff 0 4.760%, #e6f9ff 0 9.520%, #ccf2ff 0 14.280%, #b3ecff 0 19.040%, #99e6ff 0 23.800%, #80dfff 0 28.560%, #66d9ff 0 33.320%, #4dd2ff 0 38.080%, #33ccff 0 42.840%, #1ac5ff 0 47.600%, #00bfff 0 52.360%, #00ace6 0 57.120%, #0099cc 0 61.880%, #0086b3 0 66.640%, #007399 0 71.400%, #006080 0 76.160%, #004d66 0 80.920%, #00394d 0 85.680%, #002633 0 90.440%, #00131a 0 95.200%, #000 0 100%); }
.lum-arrow { position: absolute; left: 239px; top: 131px; width: 0; height: 0; border: 6px solid transparent; border-right: 7px solid #000; border-left: 0; }
.dlg-values { display: flex; margin-top: 8px; }
.preview-col { width: 75px; flex: none; }
.preview { width: 69px; height: 48px; background: #008fb8; border: 1px solid; border-color: #a0a0a0 #fff #fff #a0a0a0; }
.preview-lbl { margin-top: 3px; line-height: 18px; padding-left: 7px; white-space: nowrap; }
.preview-lbl b { font-weight: 400; color: #224; margin: 0 3px; }
.fields { width: 176px; display: grid; grid-template-columns: 67px 32px 45px 32px; grid-auto-rows: 23px; row-gap: 3px; align-items: center; }
.fields label { text-align: right; padding-right: 1px; white-space: nowrap; letter-spacing: -.4px; }
.fields label:nth-child(4n+3) { padding-right: 4px; }
.fld { height: 23px; background: #fff; border: 1px solid #7a7a7a; line-height: 19px; padding-left: 4px; font-size: 12px; }
.dlg-add { width: 248px; position: absolute; left: 1px; top: 313px; }

/* taskbar */
.taskbar { position: absolute; left: 0; top: 804px; width: 1767px; height: 40px; display: flex; }
.task-apps { width: 229px; height: 40px; background: #010204; display: flex; flex: none; gap: 9px; }
.task-app { height: 40px; border-bottom: 2px solid #76b9ed; display: flex; align-items: center; justify-content: center; padding-bottom: 2px; }
.task-chrome { width: 38px; }
.task-files { width: 40px; margin-right: -4px; }
.task-paint { width: 48px; background: #33353b; }
.task-mid { flex: 1; height: 40px; background: rgba(0,0,0,.85); }
.tray { flex: none; width: 211px; height: 40px; background: rgba(0,0,0,.85); display: flex; align-items: center; justify-content: flex-end; color: #fff; gap: 9px; padding-right: 7px; }
.tray-a { font-size: 18px; line-height: 22px; font-family: "Noto Sans", sans-serif; margin: 0 2px 0 0; font-weight: 300; }
.clock { display: flex; flex-direction: column; align-items: center; line-height: 17px; font-size: 12px; width: 60px; margin-right: 8px; color: #eee; }
.task-end { width: 18px; height: 40px; background: #010204 linear-gradient(#8a8a8a, #8a8a8a) 13px 0 / 1px 100% no-repeat; flex: none; }
```
